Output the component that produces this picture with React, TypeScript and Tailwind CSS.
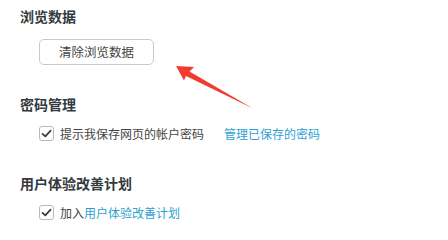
export default function App() {
  const font = { fontFamily: '"Noto Sans CJK SC", "Noto Sans", sans-serif' };

  const Check = () => (
    <span className="flex items-center justify-center w-[15px] h-[15px] rounded-[3px] border border-[#b9b9b9] bg-white">
      <svg width="11" height="11" viewBox="0 0 11 11" fill="none">
        <path d="M1.5 5.8 L4.3 8.4 L9.6 2.6" stroke="#3a3a3a" strokeWidth="1.7" strokeLinecap="round" strokeLinejoin="round" />
      </svg>
    </span>
  );

  return (
    <div className="relative w-[448px] h-[240px] bg-white overflow-hidden" style={font}>
      <div className="flex flex-col pl-5 pt-[6px]">
        <h2 className="text-[14px] leading-[20px] font-bold text-[#333a40]">浏览数据</h2>
        <div className="pl-[19px] mt-[12px]">
          <button className="h-[26px] w-[115px] rounded-[5px] border border-[#c9c9c9] bg-white text-[12.5px] text-[#444] leading-none">
            清除浏览数据
          </button>
        </div>

        <h2 className="mt-[29px] text-[14px] leading-[20px] font-bold text-[#333a40]">密码管理</h2>
        <div className="pl-[19px] mt-[11px] flex items-center h-[17px] text-[12px] text-[#444]">
          <Check />
          <span className="ml-[6px]">提示我保存网页的帐户密码</span>
          <span className="ml-[20px] text-[#2f9fd0]">管理已保存的密码</span>
        </div>

        <h2 className="mt-[31px] text-[14px] leading-[20px] font-bold text-[#333a40]">用户体验改善计划</h2>
        <div className="pl-[19px] mt-[11px] flex items-center h-[17px] text-[12px] text-[#444]">
          <Check />
          <span className="ml-[6px]">加入</span>
          <span className="text-[#2f9fd0]">用户体验改善计划</span>
        </div>
      </div>

      <svg className="absolute left-0 top-0 pointer-events-none" width="448" height="240" viewBox="0 0 448 240">
        <polygon
          points="176,66 194,67 189.5,71.5 253,108.5 186,76 184,80.5"
          fill="#f23b30"
        />
      </svg>
    </div>
  );
}
